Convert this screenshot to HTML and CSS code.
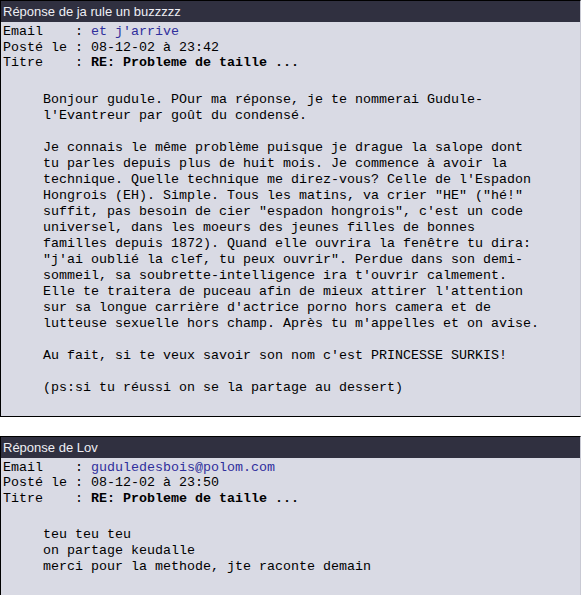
FILE: index.html
```html
<!DOCTYPE html>
<html lang="fr">
<head>
<meta charset="utf-8">
<title>Réponses</title>
<link rel="stylesheet" href="styles.css">
</head>
<body>
<div class="post">
  <div class="post-head">Réponse de ja rule un buzzzzz</div>
  <div class="post-meta">
    <div class="meta-row">Email    : <a class="mail" href="#">et j'arrive</a></div>
    <div class="meta-row">Posté le : 08-12-02 à 23:42</div>
    <div class="meta-row">Titre    : <b>RE: Probleme de taille ...</b></div>
  </div>
  <blockquote class="post-body">
    <p>Bonjour gudule. POur ma réponse, je te nommerai Gudule-<br>l'Evantreur par goût du condensé.</p>
    <p>Je connais le même problème puisque je drague la salope dont<br>tu parles depuis plus de huit mois. Je commence à avoir la<br>technique. Quelle technique me direz-vous? Celle de l'Espadon<br>Hongrois (EH). Simple. Tous les matins, va crier "HE" ("hé!"<br>suffit, pas besoin de cier "espadon hongrois", c'est un code<br>universel, dans les moeurs des jeunes filles de bonnes<br>familles depuis 1872). Quand elle ouvrira la fenêtre tu dira:<br>"j'ai oublié la clef, tu peux ouvrir". Perdue dans son demi-<br>sommeil, sa soubrette-intelligence ira t'ouvrir calmement.<br>Elle te traitera de puceau afin de mieux attirer l'attention<br>sur sa longue carrière d'actrice porno hors camera et de<br>lutteuse sexuelle hors champ. Après tu m'appelles et on avise.</p>
    <p>Au fait, si te veux savoir son nom c'est PRINCESSE SURKIS!</p>
    <p>(ps:si tu réussi on se la partage au dessert)</p>
  </blockquote>
</div>
<div class="post post-second">
  <div class="post-head">Réponse de Lov</div>
  <div class="post-meta">
    <div class="meta-row">Email    : <a class="mail" href="#">guduledesbois@polom.com</a></div>
    <div class="meta-row">Posté le : 08-12-02 à 23:50</div>
    <div class="meta-row">Titre    : <b>RE: Probleme de taille ...</b></div>
  </div>
  <blockquote class="post-body">
    <p>teu teu teu<br>on partage keudalle<br>merci pour la methode, jte raconte demain</p>
  </blockquote>
</div>
</body>
</html>
```
FILE: styles.css
```css
html, body {
  margin: 0;
  padding: 0;
  background: #ffffff;
}

body {
  font-family: "Liberation Mono", "Courier New", monospace;
  font-size: 13.33px;
  color: #000000;
}

.post {
  display: flow-root;
  background: #d9dae4;
  border: 1px solid #000000;
  border-right: 1px solid #c8c9d3;
}

.post-second {
  margin-top: 19px;
  border-bottom: none;
}

.post-head {
  height: 21px;
  background: #303040;
  color: #eeeef4;
  font-family: "Liberation Sans", Arial, sans-serif;
  font-size: 13px;
  line-height: 21px;
  padding-left: 2px;
}

.post-meta {
  padding: 2px 0 0 2px;
}

.meta-row {
  white-space: pre;
  line-height: 15.5px;
}

.mail {
  color: #2f2f9c;
  text-decoration: none;
}

.post-body {
  margin: 21px 40px 20px 40px;
  padding-left: 2px;
  line-height: 16px;
  white-space: nowrap;
}

.post-body p {
  margin: 0;
}

.post-body p + p {
  margin-top: 16px;
}
```
